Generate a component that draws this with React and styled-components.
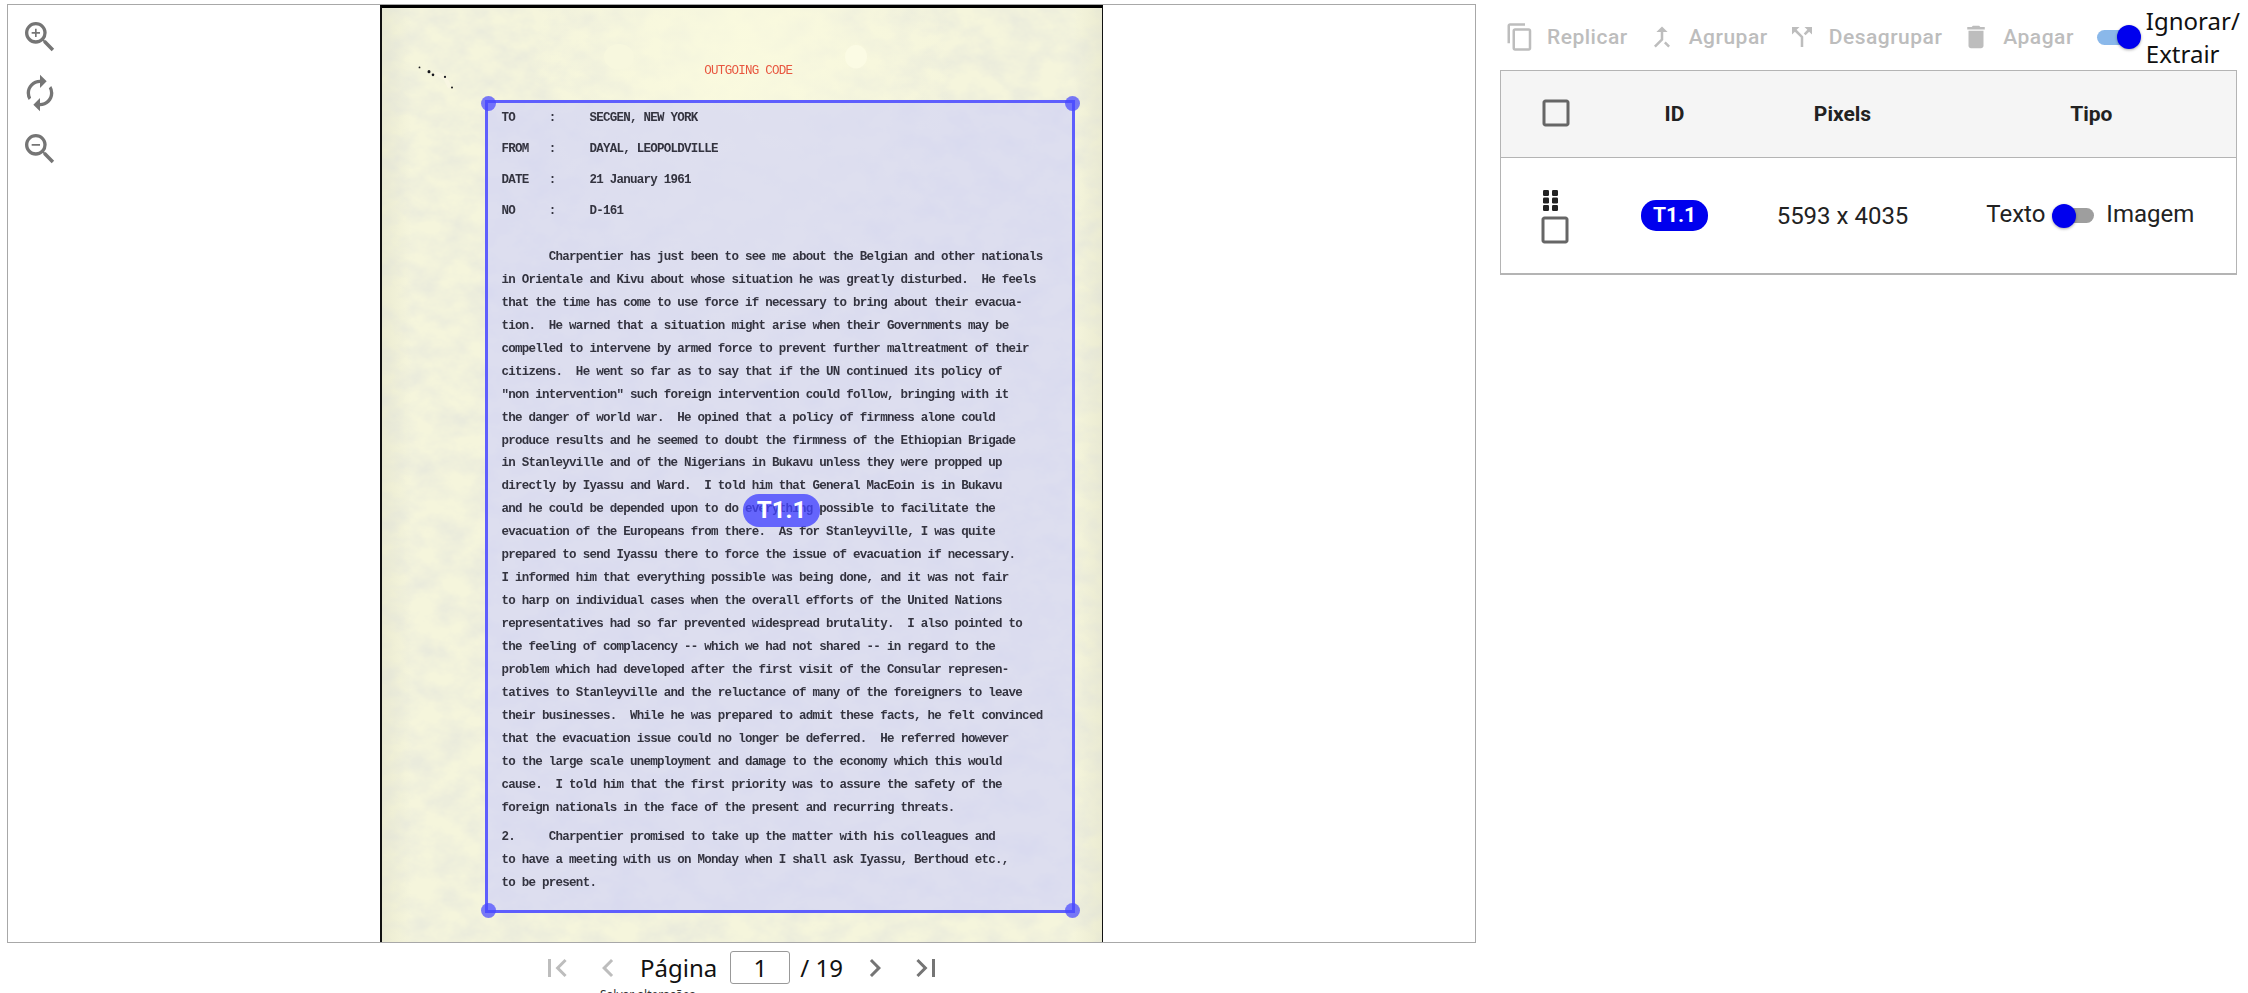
import * as React from 'react';
import styled, { createGlobalStyle } from 'styled-components';
import {
  MdZoomIn,
  MdZoomOut,
  MdSync,
  MdContentCopy,
  MdCallMerge,
  MdCallSplit,
  MdDelete,
  MdCheckBoxOutlineBlank,
  MdFirstPage,
  MdLastPage,
  MdChevronLeft,
  MdChevronRight,
} from 'react-icons/md';

const headerLines = [
  'TO     :     SECGEN, NEW YORK',
  'FROM   :     DAYAL, LEOPOLDVILLE',
  'DATE   :     21 January 1961',
  'NO     :     D-161',
];

const bodyLines = [
  '       Charpentier has just been to see me about the Belgian and other nationals',
  'in Orientale and Kivu about whose situation he was greatly disturbed.  He feels',
  'that the time has come to use force if necessary to bring about their evacua-',
  'tion.  He warned that a situation might arise when their Governments may be',
  'compelled to intervene by armed force to prevent further maltreatment of their',
  'citizens.  He went so far as to say that if the UN continued its policy of',
  '"non intervention" such foreign intervention could follow, bringing with it',
  'the danger of world war.  He opined that a policy of firmness alone could',
  'produce results and he seemed to doubt the firmness of the Ethiopian Brigade',
  'in Stanleyville and of the Nigerians in Bukavu unless they were propped up',
  'directly by Iyassu and Ward.  I told him that General MacEoin is in Bukavu',
  'and he could be depended upon to do everything possible to facilitate the',
  'evacuation of the Europeans from there.  As for Stanleyville, I was quite',
  'prepared to send Iyassu there to force the issue of evacuation if necessary.',
  'I informed him that everything possible was being done, and it was not fair',
  'to harp on individual cases when the overall efforts of the United Nations',
  'representatives had so far prevented widespread brutality.  I also pointed to',
  'the feeling of complacency -- which we had not shared -- in regard to the',
  'problem which had developed after the first visit of the Consular represen-',
  'tatives to Stanleyville and the reluctance of many of the foreigners to leave',
  'their businesses.  While he was prepared to admit these facts, he felt convinced',
  'that the evacuation issue could no longer be deferred.  He referred however',
  'to the large scale unemployment and damage to the economy which this would',
  'cause.  I told him that the first priority was to assure the safety of the',
  'foreign nationals in the face of the present and recurring threats.',
];

const closingLines = [
  '2.     Charpentier promised to take up the matter with his colleagues and',
  'to have a meeting with us on Monday when I shall ask Iyassu, Berthoud etc.,',
  'to be present.',
];

const toolbarActions = [
  { label: 'Replicar', Icon: MdContentCopy },
  { label: 'Agrupar', Icon: MdCallMerge },
  { label: 'Desagrupar', Icon: MdCallSplit },
  { label: 'Apagar', Icon: MdDelete },
];

const PaperTexture = () => (
  <TextureSvg viewBox="0 0 720 940" preserveAspectRatio="none">
    <defs>
      <filter id="mottle" x="0" y="0" width="100%" height="100%">
        <feTurbulence type="fractalNoise" baseFrequency="0.035 0.05" numOctaves="5" seed="7" />
        <feColorMatrix
          type="matrix"
          values="0 0 0 0 0.68  0 0 0 0 0.7  0 0 0 0 0.72  0.7 0 0 0 -0.22"
        />
      </filter>
      <radialGradient id="glow" cx="50%" cy="6%" r="30%">
        <stop offset="0%" stopColor="#fbfbdf" stopOpacity="0.85" />
        <stop offset="100%" stopColor="#fbfbdf" stopOpacity="0" />
      </radialGradient>
    </defs>
    <rect width="720" height="940" filter="url(#mottle)" />
    <rect width="720" height="940" fill="url(#glow)" />
    <ellipse cx="237" cy="46" rx="15" ry="12" fill="#f7f7de" />
    <ellipse cx="474" cy="46" rx="11" ry="11" fill="#fbfbe4" />
    <path d="M50 62 L62 68 L66 76 L70 74 L64 64 L56 60 Z" fill="#f8f6e2" />
    <g fill="#15151a">
      <circle cx="37.5" cy="56" r="0.9" />
      <circle cx="47" cy="60" r="1.5" />
      <circle cx="51" cy="63" r="1.3" />
      <circle cx="63" cy="65" r="1.1" />
      <circle cx="70" cy="75" r="1" />
    </g>
  </TextureSvg>
);

const GridDots = () => (
  <svg width="15" height="21" viewBox="0 0 15 21">
    {[0, 7.5, 15].map((y) =>
      [0, 9].map((x) => <rect key={`${x}-${y}`} x={x} y={y} width="6" height="6" rx="1.2" fill="#222" />)
    )}
  </svg>
);

export default function App() {
  return (
    <Page>
      <GlobalStyle />
      <ViewerColumn>
        <Viewer>
          <ZoomTools>
            <MdZoomIn />
            <RotateIcon />
            <MdZoomOut />
          </ZoomTools>
          <Paper>
            <PaperTexture />
            <Typescript>
              <OutgoingLine>{' '.repeat(30)}<RedInk>OUTGOING CODE</RedInk></OutgoingLine>
              <HeaderBlock>
                {headerLines.map((line) => (
                  <HeaderLine key={line}>{line}</HeaderLine>
                ))}
              </HeaderBlock>
              <BodyBlock>
                {bodyLines.map((line) => (
                  <BodyLine key={line}>{line}</BodyLine>
                ))}
              </BodyBlock>
              <ClosingBlock>
                {closingLines.map((line) => (
                  <BodyLine key={line}>{line}</BodyLine>
                ))}
              </ClosingBlock>
            </Typescript>
          </Paper>
          <Selection>
            <Handle $y="top" $x="left" />
            <Handle $y="top" $x="right" />
            <Handle $y="bottom" $x="left" />
            <Handle $y="bottom" $x="right" />
            <SelectionLabel>T1.1</SelectionLabel>
          </Selection>
        </Viewer>
        <Pager>
          <PagerIcon $disabled><MdFirstPage /></PagerIcon>
          <PagerIcon $disabled><MdChevronLeft /></PagerIcon>
          <PageWord>Página</PageWord>
          <PageInput>1</PageInput>
          <PageTotal>/ 19</PageTotal>
          <PagerIcon><MdChevronRight /></PagerIcon>
          <PagerIcon><MdLastPage /></PagerIcon>
        </Pager>
        <PagerNote>Salvar alterações</PagerNote>
      </ViewerColumn>

      <SideColumn>
        <Toolbar>
          {toolbarActions.map(({ label, Icon }) => (
            <ToolbarButton key={label}>
              <Icon />
              {label}
            </ToolbarButton>
          ))}
          <IgnoreSwitch>
            <Track $width={39} $color="#8ab8ea">
              <Thumb $side="right" />
            </Track>
          </IgnoreSwitch>
          <IgnoreLabel>Ignorar/<br />Extrair</IgnoreLabel>
        </Toolbar>

        <Table>
          <colgroup>
            <col style={{ width: 110 }} />
            <col style={{ width: 128 }} />
            <col style={{ width: 208 }} />
            <col />
          </colgroup>
          <thead>
            <tr>
              <HeadCell><HeadCheckbox><MdCheckBoxOutlineBlank /></HeadCheckbox></HeadCell>
              <HeadCell>ID</HeadCell>
              <HeadCell>Pixels</HeadCell>
              <HeadCell>Tipo</HeadCell>
            </tr>
          </thead>
          <tbody>
            <tr>
              <Cell>
                <SelectStack>
                  <GridDots />
                  <Checkbox><MdCheckBoxOutlineBlank /></Checkbox>
                </SelectStack>
              </Cell>
              <Cell><IdBadge>T1.1</IdBadge></Cell>
              <Cell>5593 x 4035</Cell>
              <Cell>
                <TypeToggle>
                  <TypeWord>Texto</TypeWord>
                  <TypeSwitch>
                    <Track $width={32} $color="#9e9e9e">
                      <Thumb $side="left" />
                    </Track>
                  </TypeSwitch>
                  <TypeWord>Imagem</TypeWord>
                </TypeToggle>
              </Cell>
            </tr>
          </tbody>
        </Table>
      </SideColumn>
    </Page>
  );
}

const GlobalStyle = createGlobalStyle`
  html, body {
    margin: 0;
    height: 993px;
    overflow: hidden;
    background: #fff;
    font-family: Roboto, sans-serif;
  }
`;

const Page = styled.div`
  display: grid;
  grid-template-columns: 1469px 737px;
  column-gap: 24px;
  align-items: start;
  height: 993px;
  padding: 4px 0 0 7px;
  box-sizing: border-box;
  overflow: hidden;
`;

const ViewerColumn = styled.section`
  display: flex;
  flex-direction: column;
  min-width: 0;
`;

const Viewer = styled.div`
  position: relative;
  display: flex;
  justify-content: center;
  align-items: flex-start;
  height: 939px;
  box-sizing: border-box;
  border: 1px solid #a8a8a8;
  overflow: hidden;
`;

const ZoomTools = styled.div`
  position: absolute;
  top: 12px;
  left: 12px;
  display: flex;
  flex-direction: column;
  gap: 16px;
  color: #757575;

  svg {
    display: block;
    width: 40px;
    height: 40px;
  }
`;

const RotateIcon = styled(MdSync)`
  transform: scaleX(-1);
`;

const Paper = styled.div`
  position: relative;
  flex: none;
  width: 723px;
  height: 1000px;
  box-sizing: border-box;
  border-top: 3px solid #000;
  border-left: 2px solid #111;
  border-right: 1px solid #111;
  background:
    linear-gradient(90deg, rgba(226, 226, 200, 0.5), rgba(226, 226, 200, 0) 4%, rgba(226, 226, 200, 0) 96%, rgba(226, 226, 200, 0.5)),
    #f5f5dc;
`;

const TextureSvg = styled.svg`
  position: absolute;
  inset: 0;
  width: 100%;
  height: 100%;
`;

const Typescript = styled.div`
  position: relative;
  z-index: 2;
  padding: 52px 0 0 119.5px;
  font-family: 'Liberation Mono', monospace;
  font-weight: 700;
  font-size: 12.5px;
  letter-spacing: -0.74px;
  color: #33333f;
  white-space: pre;
  filter: blur(0.35px);
`;

const OutgoingLine = styled.div`
  line-height: 23px;
  font-weight: 400;
`;

const RedInk = styled.span`
  color: #e8563f;
`;

const HeaderBlock = styled.div`
  margin-top: 20px;
`;

const HeaderLine = styled.div`
  line-height: 31px;
`;

const BodyBlock = styled.div`
  margin-top: 19px;
`;

const BodyLine = styled.div`
  line-height: 22.93px;
`;

const ClosingBlock = styled.div`
  margin-top: 7px;
`;

const Selection = styled.div`
  position: absolute;
  top: 95px;
  left: 477px;
  width: 590px;
  height: 813px;
  box-sizing: border-box;
  border: 3px solid rgba(72, 72, 255, 0.85);
  background: rgba(206, 208, 250, 0.62);
`;

const Handle = styled.span`
  position: absolute;
  ${(p) => p.$y}: -7.5px;
  ${(p) => p.$x}: -7.5px;
  width: 15px;
  height: 15px;
  border-radius: 50%;
  background: rgba(72, 72, 255, 0.72);
`;

const SelectionLabel = styled.span`
  position: absolute;
  z-index: 3;
  top: 391px;
  left: 255px;
  width: 77px;
  height: 33px;
  border-radius: 16px;
  background: rgba(66, 66, 255, 0.78);
  color: #fff;
  font: 700 24px/33px Roboto, sans-serif;
  text-align: center;
`;

const Pager = styled.nav`
  display: flex;
  align-items: center;
  justify-content: center;
  height: 33px;
  margin-top: 8px;
  font-family: 'Noto Sans', sans-serif;
  font-size: 24px;
  color: #111;
`;

const PagerIcon = styled.span`
  display: flex;
  margin: 0 7.5px;
  color: ${(p) => (p.$disabled ? '#bdbdbd' : '#757575')};

  svg {
    width: 36px;
    height: 36px;
  }
`;

const PageWord = styled.span`
  margin-left: 7px;
`;

const PageInput = styled.span`
  width: 60px;
  height: 33px;
  margin: 0 10px 0 13px;
  box-sizing: border-box;
  border: 1px solid #999;
  border-radius: 3px;
  line-height: 31px;
  text-align: center;
`;

const PageTotal = styled.span`
  margin-right: 7px;
`;

const PagerNote = styled.div`
  margin: 3px 0 0 593px;
  font: 12px/16px 'Noto Sans', sans-serif;
  color: #333;
`;

const SideColumn = styled.section`
  display: flex;
  flex-direction: column;
  min-width: 0;
`;

const Toolbar = styled.div`
  display: flex;
  align-items: center;
  height: 66px;
  padding-left: 5px;
`;

const ToolbarButton = styled.span`
  display: flex;
  align-items: center;
  gap: 12px;
  margin-right: 19px;
  font-size: 21px;
  font-weight: 500;
  letter-spacing: 0.5px;
  color: #bdbdbd;

  svg {
    width: 30px;
    height: 30px;
  }
`;

const IgnoreSwitch = styled.span`
  display: flex;
  margin-left: 4px;
`;

const TypeSwitch = styled.span`
  display: flex;
  margin: 0 12px 0 17px;
`;

const Track = styled.span`
  position: relative;
  display: block;
  width: ${(p) => p.$width}px;
  height: 15px;
  border-radius: 8px;
  background: ${(p) => p.$color};
`;

const Thumb = styled.span`
  position: absolute;
  top: -4.5px;
  ${(p) => (p.$side === 'right' ? 'right: -5px;' : 'left: -10.5px;')}
  width: 24px;
  height: 24px;
  border-radius: 50%;
  background: #0000ee;
  box-shadow: 0 1px 3px rgba(0, 0, 0, 0.35);
`;

const IgnoreLabel = styled.span`
  margin: 0 0 0 10px;
  font: 24px/33px 'Noto Sans', sans-serif;
  color: #111;
  white-space: nowrap;
`;

const Table = styled.table`
  width: 737px;
  table-layout: fixed;
  border-collapse: collapse;
  border: 1px solid #b4b4b4;
  border-bottom-width: 2px;
`;

const HeadCell = styled.th`
  height: 86px;
  padding: 0;
  background: #f5f5f5;
  border-bottom: 1px solid #b4b4b4;
  font-size: 21px;
  font-weight: 700;
  color: #222;
  text-align: center;
`;

const Cell = styled.td`
  height: 115px;
  padding: 0;
  font-size: 24px;
  color: #222;
  text-align: center;
`;

const Checkbox = styled.span`
  display: inline-flex;
  color: #666;

  svg {
    width: 36px;
    height: 36px;
  }
`;

const HeadCheckbox = styled(Checkbox)`
  margin-top: 3px;
`;

const SelectStack = styled.div`
  display: inline-flex;
  flex-direction: column;
  align-items: flex-start;
  gap: 1px;
  margin: 6px 2px 0 0;

  svg:first-child {
    margin-left: 6px;
  }

  span svg:first-child {
    margin-left: 0;
  }
`;

const IdBadge = styled.span`
  display: inline-block;
  width: 67px;
  height: 31px;
  border-radius: 15px;
  background: #0000ee;
  color: #fff;
  font-size: 21px;
  font-weight: 700;
  line-height: 31px;
`;

const TypeToggle = styled.div`
  display: flex;
  align-items: center;
  justify-content: center;
  padding-right: 2px;
`;

const TypeWord = styled.span`
  padding-bottom: 3px;
`;
